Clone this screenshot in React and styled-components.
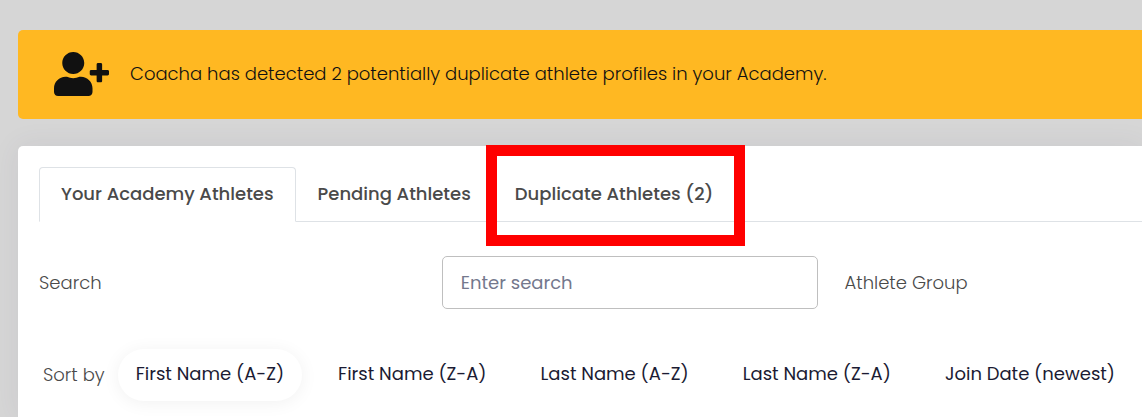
import { useState } from "react"
import styled, { createGlobalStyle } from "styled-components"
import { FaUserPlus } from "react-icons/fa"

const tabs = ["Your Academy Athletes", "Pending Athletes", "Duplicate Athletes (2)"]

const sortOptions = [
    "First Name (A-Z)",
    "First Name (Z-A)",
    "Last Name (A-Z)",
    "Last Name (Z-A)",
    "Join Date (newest)",
]

export default function App(){
    const [activeTab, setActiveTab] = useState(tabs[0])
    const [sort, setSort] = useState(sortOptions[0])
    const [search, setSearch] = useState("")

    return(
        <>
            <GlobalStyle />
            <SCPage>
                <SCNotice role="status">
                    <FaUserPlus aria-hidden="true" />
                    <p>Coacha has detected 2 potentially duplicate athlete profiles in your Academy.</p>
                </SCNotice>
                <SCPanel>
                    <SCTabs role="tablist">
                        {tabs.map((tab) => (
                            <SCTab
                                key={tab}
                                role="tab"
                                aria-selected={tab === activeTab}
                                $active={tab === activeTab}
                                onClick={() => setActiveTab(tab)}
                            >
                                {tab}
                                {tab === tabs[2] && <SCHighlight />}
                            </SCTab>
                        ))}
                    </SCTabs>
                    <SCFilters>
                        <SCLabel htmlFor="search">Search</SCLabel>
                        <SCInput
                            id="search"
                            type="text"
                            placeholder="Enter search"
                            value={search}
                            onChange={(e) => setSearch(e.target.value)}
                        />
                        <SCLabel as="span">Athlete Group</SCLabel>
                    </SCFilters>
                    <SCSort>
                        <SCLabel as="span">Sort by</SCLabel>
                        <SCSortOptions>
                            {sortOptions.map((option) => (
                                <SCSortButton
                                    key={option}
                                    $active={option === sort}
                                    onClick={() => setSort(option)}
                                >
                                    {option}
                                </SCSortButton>
                            ))}
                        </SCSortOptions>
                    </SCSort>
                </SCPanel>
            </SCPage>
        </>
    );
}

const GlobalStyle = createGlobalStyle`
    * {
        box-sizing: border-box;
    }

    body {
        margin: 0;
        background: #D6D6D6;
        overflow-x: hidden;
    }

    body, button, input {
        font-family: Poppins, Inter, sans-serif;
        font-size: 18px;
        line-height: 28px;
    }

    p {
        margin: 0;
    }
`

const SCPage = styled.main`
    min-height: 100vh;
    padding: 30px 0 0 18px;
    display: flex;
    flex-direction: column;
    gap: 27px;
`

const SCNotice = styled.div`
    min-height: 89px;
    padding: 0 36px 2px;
    display: flex;
    align-items: center;
    gap: 21px;

    background: #FFB822;
    border-radius: 5px 0 0 5px;

    color: #111111;
    font-weight: 300;

    svg {
        width: 55px;
        height: 44px;
        flex-shrink: 0;
    }
`

const SCPanel = styled.section`
    flex: 1;
    padding: 21px 0 16px 21px;

    background: #FFFFFF;
    border-radius: 5px 0 0 0;
    box-shadow: 0 0 28px rgba(82, 63, 105, 0.08);
`

const SCTabs = styled.div`
    display: flex;
    border-bottom: 1px solid #DEE2E6;
`

const SCTab = styled.button`
    position: relative;
    height: 55px;
    margin-bottom: -1px;
    padding: 0 21px 2px;

    background: ${({ $active }) => ($active ? "#FFFFFF" : "transparent")};
    border: 1px solid;
    border-color: ${({ $active }) => ($active ? "#DEE2E6 #DEE2E6 #FFFFFF" : "transparent")};
    border-radius: 4px 4px 0 0;

    color: #4A4A4A;
    font-weight: 500;
    white-space: nowrap;
`

const SCHighlight = styled.span`
    position: absolute;
    inset: -23px -11px -25px -8px;
    border: 11px solid #FF0000;
    pointer-events: none;
`

const SCFilters = styled.div`
    margin-top: 34px;
    display: grid;
    grid-template-columns: 24fr 24fr 19fr;
    align-items: center;
    gap: 27px;
`

const SCLabel = styled.label`
    color: #4A4A4A;
    font-weight: 300;
    white-space: nowrap;
`

const SCInput = styled.input`
    width: 100%;
    min-width: 0;
    height: 53px;
    padding: 0 18px;

    background: #FFFFFF;
    border: 1px solid #BFBFBF;
    border-radius: 5px;

    color: #4A4A4A;

    &::placeholder {
        color: #74788D;
        opacity: 1;
    }
`

const SCSort = styled.div`
    margin-top: 40px;
    padding-left: 4px;
    display: flex;
    align-items: center;
    gap: 13px;
`

const SCSortOptions = styled.div`
    display: flex;
    gap: 18px;
`

const SCSortButton = styled.button`
    height: 52px;
    padding: 0 18px 2px;

    background: transparent;
    border: none;
    border-radius: 26px;
    box-shadow: ${({ $active }) => ($active ? "0 2px 18px rgba(0, 0, 0, 0.06)" : "none")};

    color: #1B1B33;
    white-space: nowrap;
`
